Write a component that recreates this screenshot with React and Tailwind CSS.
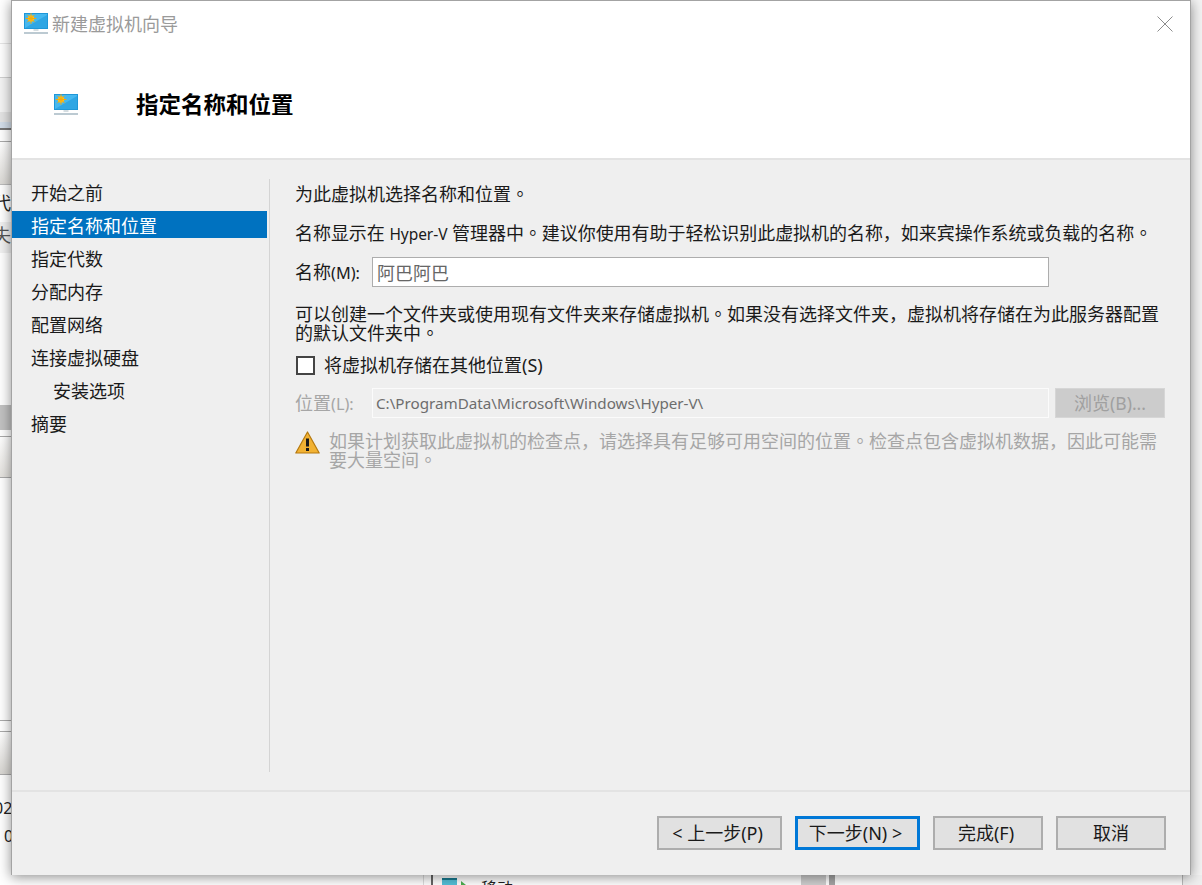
import React from 'react';

const cjk = "font-['Noto_Sans','Noto_Sans_CJK_SC',sans-serif]";

// the full stop sits in the middle of its box in the reference
const Dot = () => <span className="font-['Noto_Sans_CJK_TC',sans-serif] leading-none">。</span>;

function VmIcon({ className }) {
  return (
    <svg className={className} viewBox="0 0 24 24">
      <rect x="0" y="1" width="24" height="16" fill="#1f97d8" />
      <rect x="1" y="2" width="22" height="14" fill="#45b8f0" />
      <path d="M1 16L23 3V16Z" fill="#2fa6e4" />
      <circle cx="7" cy="6.5" r="3.2" fill="#ffc21f" />
      <path d="M7 1.2v10.6M1.7 6.5h10.6M3.3 2.8l7.4 7.4M10.7 2.8l-7.4 7.4" stroke="#f4a90c" strokeWidth="1" />
      <rect x="9.5" y="17" width="5" height="2" fill="#d5dde1" />
      <rect x="0" y="20" width="24" height="2" fill="#bccad2" />
    </svg>
  );
}

function WarnIcon() {
  return (
    <svg className="w-[25px] h-[23px] shrink-0" viewBox="0 0 25 23">
      <path d="M12.5 1 L24.2 22 L0.8 22 Z" fill="#f2b233" stroke="#b5790f" strokeWidth="1.2" strokeLinejoin="round" />
      <rect x="11" y="7.5" width="3" height="8" fill="#1a1a1a" />
      <rect x="11" y="17" width="3" height="3" fill="#1a1a1a" />
    </svg>
  );
}

function NavItem({ label, active, sub }) {
  return (
    <div className={`h-[27px] mb-[6px] pt-[2px] flex items-center text-[18px] leading-none ${sub ? 'pl-[41px]' : 'pl-[19px]'} ${active ? 'bg-[#0072c0] text-white' : 'text-[#1a1a1a]'}`}>
      {label}
    </div>
  );
}

function Btn({ className, children }) {
  return (
    <button className={`h-[34px] bg-[#e1e1e1] text-[18px] leading-none text-[#1a1a1a] flex items-center justify-center ${className}`}>
      {children}
    </button>
  );
}

// bits of the window behind the dialog, left edge
function LeftStrip() {
  return (
    <div className={`w-[11px] shrink-0 flex flex-col overflow-hidden text-[18px] leading-none text-[#222] bg-white ${cjk}`}>
      <div className="h-[44px] shrink-0 border-b border-[#e6e6e6]" />
      <div className="h-[34px] shrink-0 border-b border-[#d0d0d0]" />
      <div className="h-[34px] shrink-0 bg-[#f4f4f4]" />
      <div className="h-[10px] shrink-0 bg-[#e4e4e4]" />
      <div className="h-[8px] shrink-0 bg-[#d3deea] border-b-2 border-[#777]" />
      <div className="h-[12px] shrink-0 bg-white border-b border-[#aaa]" />
      <div className="h-[43px] shrink-0 bg-gradient-to-b from-white to-[#dcdad6] border-b border-[#bbb]" />
      <div className="h-[37px] shrink-0 bg-white pt-[9px]">
        <div className="whitespace-nowrap -ml-[7px]">代式</div>
      </div>
      <div className="h-[31px] shrink-0 bg-[#f1f1f1] pt-[4px]">
        <div className="whitespace-nowrap -ml-[7px] text-[#555]">失木</div>
      </div>
      <div className="h-[152px] shrink-0 bg-white" />
      <div className="h-[25px] shrink-0 bg-[#c2c2c2]" />
      <div className="h-[7px] shrink-0 bg-white border-b border-[#aaa]" />
      <div className="h-[41px] shrink-0 bg-gradient-to-b from-white to-[#e4e2de] border-b border-[#aaa]" />
      <div className="h-[242px] shrink-0 bg-white" />
      <div className="h-[12px] shrink-0 bg-white border-t border-b border-[#aaa]" />
      <div className="h-[43px] shrink-0 bg-gradient-to-b from-white to-[#d8d6d2] border-b border-[#aaa]" />
      <div className="h-[22px] shrink-0 bg-white" />
      <div className="h-[27px] shrink-0 leading-[22px] whitespace-nowrap -ml-[6px] text-[16px]">02</div>
      <div className="h-[24px] shrink-0 leading-[24px] whitespace-nowrap pl-[4px] text-[16px]">0</div>
    </div>
  );
}

function BottomStrip() {
  return (
    <div className={`h-[10px] flex bg-white overflow-hidden ${cjk}`}>
      <div className="w-[423px] shrink-0" />
      <div className="w-[8px] shrink-0 border-l border-[#ddd]" />
      <div className="w-[370px] shrink-0 border-l-2 border-[#666] pl-[9px] pt-[3px] flex gap-[4px]">
        <div className="w-[15px] h-[12px] bg-[#54c0d8] border-t-2 border-[#17798f]" />
        <div className="w-0 h-0 mt-[3px] border-l-[5px] border-l-[#4caf50] border-y-[4px] border-y-transparent" />
        <span className="ml-[11px] mt-[1px] text-[16px] leading-[18px] text-[#222]">移动</span>
      </div>
      <div className="w-[25px] shrink-0 bg-[#cfcfcf]" />
      <div className="w-[3px] shrink-0" />
      <div className="w-[6px] shrink-0 bg-[#a6a6a6]" />
      <div className="w-[347px] shrink-0" />
      <div className="w-[1px] shrink-0 bg-[#bbb]" />
      <div className="flex-1 bg-[#efefef]" />
    </div>
  );
}

export default function App() {
  return (
    <div className={`w-[1202px] h-[885px] flex flex-col overflow-hidden bg-white ${cjk}`}>
      <div className="h-[875px] flex">
        <LeftStrip />

        <div className="relative w-[1180px] shrink-0 flex flex-col bg-[#efefef] border-l border-t border-r border-[#a3a3a3] shadow-[0_2px_12px_rgba(0,0,0,0.45)]">
          {/* header */}
          <div className="h-[159px] shrink-0 bg-white border-b-2 border-[#e3e3e3]">
            <div className="h-[35px] pt-[11px] pl-[12px] pr-[17px] flex items-start">
              <VmIcon className="w-[24px] h-[24px]" />
              <span className="ml-[4px] text-[18px] leading-[24px] text-[#9a9a9a]">新建虚拟机向导</span>
              <svg className="ml-auto mt-[4px] w-[16px] h-[16px]" viewBox="0 0 16 16">
                <path d="M0.5 0.5L15.5 15.5M15.5 0.5L0.5 15.5" stroke="#8c8c8c" strokeWidth="1" fill="none" />
              </svg>
            </div>
            <div className="mt-[55px] pl-[42px] flex items-center h-[28px]">
              <VmIcon className="w-[24px] h-[24px]" />
              <h1 className="ml-[58px] text-[22.5px] leading-none font-bold text-black">指定名称和位置</h1>
            </div>
          </div>

          {/* body */}
          <div className="flex-1 flex min-h-0">
            <div className="w-[255px] shrink-0 pt-[18px]">
              <NavItem label="开始之前" />
              <NavItem label="指定名称和位置" active />
              <NavItem label="指定代数" />
              <NavItem label="分配内存" />
              <NavItem label="配置网络" />
              <NavItem label="连接虚拟硬盘" />
              <NavItem label="安装选项" sub />
              <NavItem label="摘要" />
            </div>
            <div className="mt-[19px] mb-[18px] ml-[2px] w-[2px] bg-[#d4d4d4]" />
            <div className="flex-1 pl-[25px] pr-[25px] pt-[23px] text-[18px] text-[#1a1a1a]">
              <p className="leading-[22px] whitespace-nowrap">为此虚拟机选择名称和位置<Dot /></p>
              <p className="mt-[17px] leading-[22px] whitespace-nowrap tracking-[-0.05px]">名称显示在 <span className="text-[15.5px]">Hyper-V</span> 管理器中<Dot />建议你使用有助于轻松识别此虚拟机的名称，如来宾操作系统或负载的名称<Dot /></p>
              <div className="mt-[12px] flex items-center h-[30px]">
                <label className="w-[77px] shrink-0 whitespace-nowrap">名称<span className="text-[16.3px]">(M):</span></label>
                <input
                  readOnly
                  value="阿巴阿巴"
                  className="w-[677px] h-[30px] bg-white border border-[#adadad] px-[4px] text-[18px] text-[#666] outline-none"
                />
              </div>
              <p className="mt-[17px] w-[870px] leading-[18px]">可以创建一个文件夹或使用现有文件夹来存储虚拟机<Dot />如果没有选择文件夹，虚拟机将存储在为此服务器配置的默认文件夹中<Dot /></p>
              <div className="mt-[12px] flex items-center h-[22px]">
                <span className="ml-[1px] w-[19px] h-[19px] bg-white border-2 border-[#444]" />
                <span className="ml-[9px] whitespace-nowrap">将虚拟机存储在其他位置(S)</span>
              </div>
              <div className="mt-[12px] flex items-center h-[30px]">
                <label className="w-[77px] shrink-0 whitespace-nowrap text-[#a6a6a6]">位置<span className="text-[16.3px]">(L):</span></label>
                <div className="w-[677px] h-[30px] border border-[#fbfbfb] bg-[#efefef] px-[3px] flex items-center text-[15.2px] text-[#6d6d6d] whitespace-nowrap">
                  C:\ProgramData\Microsoft\Windows\Hyper-V\
                </div>
                <div className="ml-[6px] w-[110px] h-[30px] bg-[#cccccc] border border-[#d6d6d6] flex items-center justify-center text-[#a0a0a0]">浏览<span className="text-[17.5px]">(B)...</span></div>
              </div>
              <div className="mt-[13px] flex items-start">
                <WarnIcon />
                <p className="ml-[9px] w-[832px] leading-[18px] text-[#a6a6a6]">如果计划获取此虚拟机的检查点，请选择具有足够可用空间的位置<Dot />检查点包含虚拟机数据，因此可能需要大量空间<Dot /></p>
              </div>
            </div>
          </div>

          {/* footer */}
          <div className="h-[85px] shrink-0 border-t-2 border-[#e3e3e3] pt-[24px] pl-[645px] flex items-start">
            <Btn className="w-[125px] pr-[4px] border-2 border-[#adadad]">&lt; 上一步(P)</Btn>
            <Btn className="ml-[13px] w-[125px] pr-[4px] border-[3px] border-[#0078d7]">下一步(N) &gt;</Btn>
            <Btn className="ml-[13px] w-[110px] pr-[4px] border-2 border-[#adadad]">完成(F)</Btn>
            <Btn className="ml-[13px] w-[110px] border-2 border-[#adadad]">取消</Btn>
          </div>
        </div>

        <div className="flex-1 bg-[#f4f4f4]" />
      </div>
      <BottomStrip />
    </div>
  );
}
